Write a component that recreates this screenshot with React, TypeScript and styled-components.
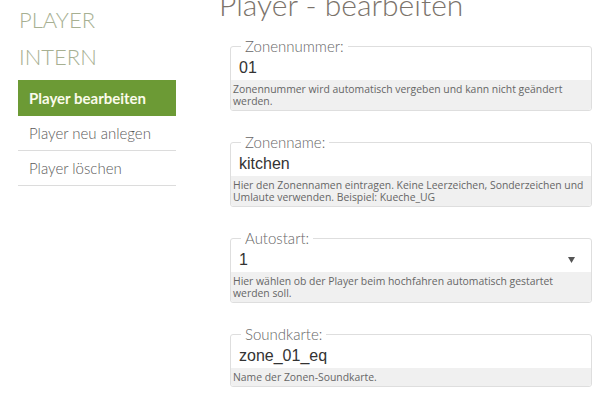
import React from 'react';
import styled, { createGlobalStyle } from 'styled-components';

const GlobalStyle = createGlobalStyle`
  html, body {
    margin: 0;
    padding: 0;
    background: #fff;
    overflow: hidden;
  }
  body {
    font-family: Lato, "Open Sans", sans-serif;
  }
`;

const fields = [
  {
    label: 'Zonennummer:',
    value: '01',
    help: 'Zonennummer wird automatisch vergeben und kann nicht geändert werden.',
  },
  {
    label: 'Zonenname:',
    value: 'kitchen',
    help: 'Hier den Zonennamen eintragen. Keine Leerzeichen, Sonderzeichen und Umlaute verwenden. Beispiel: Kueche_UG',
  },
  {
    label: 'Autostart:',
    value: '1',
    select: true,
    help: 'Hier wählen ob der Player beim hochfahren automatisch gestartet werden soll.',
  },
  {
    label: 'Soundkarte:',
    value: 'zone_01_eq',
    help: 'Name der Zonen-Soundkarte.',
  },
];

const App = () => {
  return (
    <>
      <GlobalStyle />
      <Page>
        <Sidebar>
          <SideTitle>
            PLAYER
            <br />
            INTERN
          </SideTitle>
          <NavList>
            <NavItem active>Player bearbeiten</NavItem>
            <NavItem>Player neu anlegen</NavItem>
            <NavItem>Player löschen</NavItem>
          </NavList>
        </Sidebar>

        <Main>
          <Title>Player - bearbeiten</Title>
          <Form>
            {fields.map((f) => (
              <Field key={f.label}>
                <Legend>{f.label}</Legend>
                {f.select ? (
                  <SelectBox>
                    <span>{f.value}</span>
                    <svg width="7" height="6" viewBox="0 0 7 6">
                      <path d="M0 0h7L3.5 6z" fill="#555" />
                    </svg>
                  </SelectBox>
                ) : (
                  <Input readOnly value={f.value} />
                )}
                <Help>{f.help}</Help>
              </Field>
            ))}
          </Form>
        </Main>
      </Page>
    </>
  );
};

const Page = styled.div`
  display: flex;
  align-items: flex-start;
  width: 608px;
  height: 399px;
  overflow: hidden;
`;

const Sidebar = styled.div`
  width: 158px;
  margin-left: 18px;
  padding-top: 1px;
`;

const SideTitle = styled.h2`
  margin: 0 0 5px 1px;
  font-size: 22px;
  font-weight: 300;
  line-height: 37px;
  color: #a7b092;
`;

const NavList = styled.ul`
  list-style: none;
  margin: 0;
  padding: 0;
`;

const NavItem = styled.li<{ active?: boolean }>`
  padding-left: 11px;
  font-size: 15px;
  height: ${(p) => (p.active ? '36px' : '34px')};
  line-height: ${(p) => (p.active ? '36px' : '34px')};
  font-weight: ${(p) => (p.active ? 700 : 300)};
  color: ${(p) => (p.active ? '#fbfbeb' : '#5a5a5a')};
  background: ${(p) => (p.active ? '#6c9a35' : 'transparent')};
  border-bottom: ${(p) => (p.active ? 'none' : '1px solid #dcdcdc')};
`;

const Main = styled.div`
  margin-left: 44px;
  flex: 1;
`;

const Title = styled.h1`
  margin: -14px 0 0 -1px;
  font-size: 30px;
  line-height: 36px;
  font-weight: 300;
  color: #7b736b;
  white-space: nowrap;
`;

const Form = styled.div`
  display: flex;
  flex-direction: column;
  gap: 23px;
  margin-top: 16px;
  padding-left: 10px;
`;

const Field = styled.fieldset`
  width: 362px;
  box-sizing: border-box;
  margin: 0;
  padding: 0;
  border: 1px solid #dedede;
  border-radius: 3px;
  min-width: 0;
`;

const Legend = styled.legend`
  margin-left: 10px;
  padding: 0 4px;
  font-size: 15px;
  line-height: 16px;
  font-weight: 300;
  color: #666;
`;

const Input = styled.input`
  display: block;
  width: 100%;
  box-sizing: border-box;
  height: 26px;
  padding: 2px 8px 0;
  border: none;
  outline: none;
  background: transparent;
  font-family: "Liberation Sans", Arial, sans-serif;
  font-size: 16px;
  line-height: 24px;
  color: #333;
`;

const SelectBox = styled.div`
  display: flex;
  align-items: center;
  justify-content: space-between;
  height: 26px;
  box-sizing: border-box;
  padding: 2px 16px 0 8px;
  font-family: "Liberation Sans", Arial, sans-serif;
  font-size: 16px;
  line-height: 24px;
  color: #333;
`;

const Help = styled.div`
  padding: 3px 2px 3px 2px;
  background: #f0f0f0;
  font-family: "Open Sans", sans-serif;
  font-size: 10.4px;
  line-height: 12px;
  color: #666;
  border-radius: 0 0 3px 3px;
`;

export default App;
